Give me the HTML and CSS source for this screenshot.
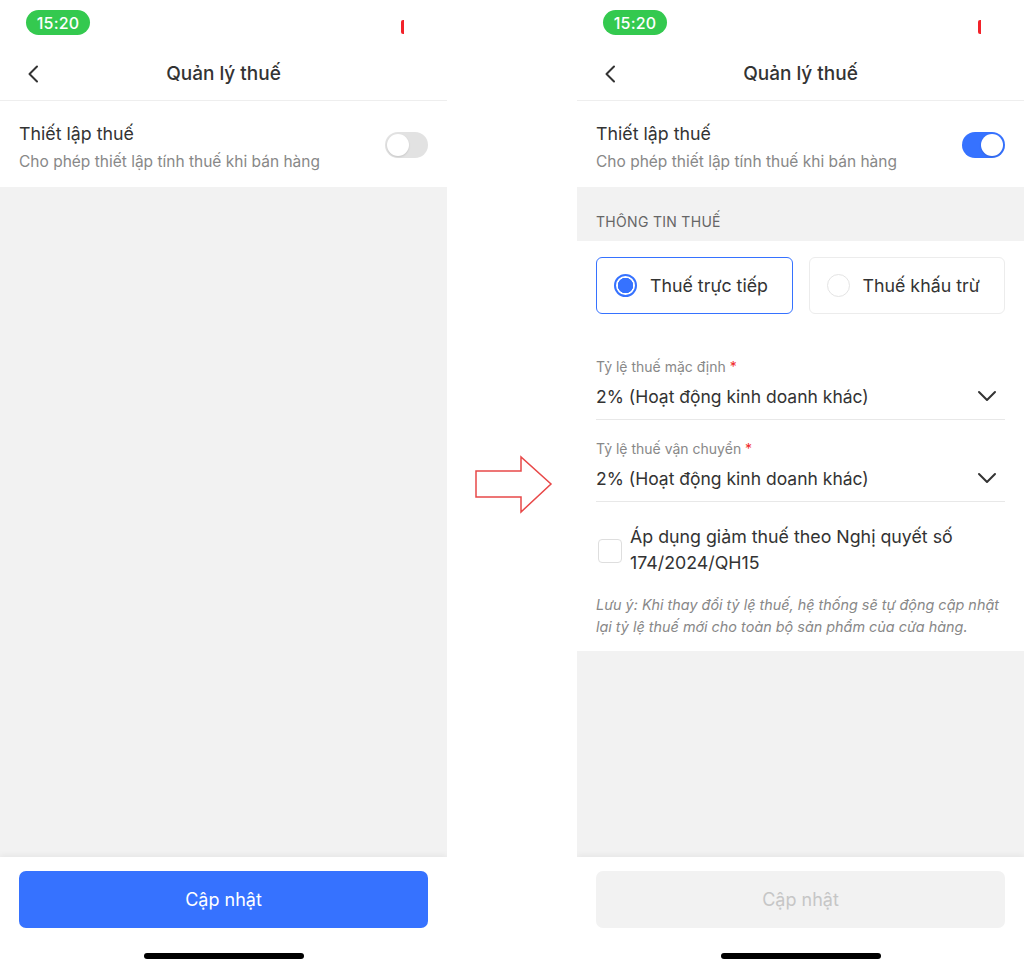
FILE: index.html
```html
<!DOCTYPE html>
<html lang="vi">
<head>
<meta charset="utf-8">
<title>Quản lý thuế</title>
<link rel="stylesheet" href="styles.css">
</head>
<body>
<div class="page">
  <section class="phone">
    <div class="status">
      <span class="time">15:20</span>
      <span class="rec"></span>
    </div>
    <header class="nav">
      <svg class="back" width="12" height="18" viewBox="0 0 12 18"><path d="M10 1.5 L2.5 9 L10 16.5" fill="none" stroke="#333" stroke-width="2" stroke-linecap="round" stroke-linejoin="round"/></svg>
      <h1 class="title">Quản lý thuế</h1>
      <span></span>
    </header>
    <div class="setting">
      <div class="setting-text">
        <div class="setting-title">Thiết lập thuế</div>
        <div class="setting-sub">Cho phép thiết lập tính thuế khi bán hàng</div>
      </div>
      <span class="toggle"><span class="knob"></span></span>
    </div>
    <div class="fill"></div>
    <footer class="bottom">
      <button class="btn btn-primary">Cập nhật</button>
      <span class="home"></span>
    </footer>
  </section>

  <div class="middle">
    <svg class="arrow" width="78" height="60" viewBox="0 0 78 60"><path d="M1 16 H46 V2 L76 29 L46 57 V42 H1 Z" fill="#fff" stroke="#e84848" stroke-width="1.5" stroke-linejoin="miter"/></svg>
  </div>

  <section class="phone">
    <div class="status">
      <span class="time">15:20</span>
      <span class="rec"></span>
    </div>
    <header class="nav">
      <svg class="back" width="12" height="18" viewBox="0 0 12 18"><path d="M10 1.5 L2.5 9 L10 16.5" fill="none" stroke="#333" stroke-width="2" stroke-linecap="round" stroke-linejoin="round"/></svg>
      <h1 class="title">Quản lý thuế</h1>
      <span></span>
    </header>
    <div class="setting">
      <div class="setting-text">
        <div class="setting-title">Thiết lập thuế</div>
        <div class="setting-sub">Cho phép thiết lập tính thuế khi bán hàng</div>
      </div>
      <span class="toggle on"><span class="knob"></span></span>
    </div>
    <div class="section-head">THÔNG TIN THUẾ</div>
    <div class="form">
      <div class="radios">
        <label class="radio-card active"><span class="radio"></span>Thuế trực tiếp</label>
        <label class="radio-card"><span class="radio"></span>Thuế khấu trừ</label>
      </div>
      <div class="field">
        <div class="field-label">Tỷ lệ thuế mặc định <span class="req">*</span></div>
        <div class="field-value">
          <span>2% (Hoạt động kinh doanh khác)</span>
          <svg width="20" height="12" viewBox="0 0 20 12"><path d="M2 2 L10 10 L18 2" fill="none" stroke="#333" stroke-width="2" stroke-linecap="round" stroke-linejoin="round"/></svg>
        </div>
      </div>
      <div class="field">
        <div class="field-label">Tỷ lệ thuế vận chuyển <span class="req">*</span></div>
        <div class="field-value">
          <span>2% (Hoạt động kinh doanh khác)</span>
          <svg width="20" height="12" viewBox="0 0 20 12"><path d="M2 2 L10 10 L18 2" fill="none" stroke="#333" stroke-width="2" stroke-linecap="round" stroke-linejoin="round"/></svg>
        </div>
      </div>
      <div class="check-row">
        <span class="checkbox"></span>
        <span class="check-text">Áp dụng giảm thuế theo Nghị quyết số 174/2024/QH15</span>
      </div>
      <p class="note">Lưu ý: Khi thay đổi tỷ lệ thuế, hệ thống sẽ tự động cập nhật lại tỷ lệ thuế mới cho toàn bộ sản phẩm của cửa hàng.</p>
    </div>
    <div class="fill"></div>
    <footer class="bottom">
      <button class="btn btn-disabled">Cập nhật</button>
      <span class="home"></span>
    </footer>
  </section>
</div>
</body>
</html>
```

FILE: styles.css
```css
* { box-sizing: border-box; }
html, body { margin: 0; padding: 0; background: #fff; }
body { font-family: "Inter", "Roboto", "Noto Sans", sans-serif; color: #333; }

.page { display: flex; width: 1024px; height: 969px; }

.phone {
  width: 447px;
  height: 969px;
  display: flex;
  flex-direction: column;
  background: #f2f2f2;
  flex: none;
  overflow: hidden;
}

.middle {
  width: 130px;
  flex: none;
  display: flex;
  align-items: center;
  justify-content: flex-start;
  padding-left: 28px;
  background: #fff;
}
.arrow { display: block; margin-top: 1px; }

.status {
  height: 50px;
  background: #fff;
  display: flex;
  justify-content: space-between;
  padding: 10px 43px 0 26px;
}
.time {
  width: 64px;
  height: 25px;
  border-radius: 13px;
  background: #34c94f;
  color: #fff;
  font-size: 16px;
  font-weight: 500;
  display: flex;
  align-items: center;
  justify-content: center;
  letter-spacing: 0.2px;
}
.rec {
  width: 3px;
  height: 14px;
  margin-top: 10px;
  background: #f2222a;
  border-radius: 2px 0 0 2px;
}

.nav {
  height: 51px;
  background: #fff;
  border-bottom: 1px solid #eeeeee;
  display: grid;
  grid-template-columns: 60px 1fr 60px;
  align-items: center;
  padding-bottom: 3px;
}
.back { margin-left: 27px; }
.title {
  margin: 0;
  text-align: center;
  font-size: 19px;
  font-weight: 500;
  color: #333;
}

.setting {
  height: 86px;
  background: #fff;
  display: flex;
  align-items: center;
  justify-content: space-between;
  padding: 6px 19px 0;
}
.setting-title { font-size: 17.8px; color: #333; line-height: 22px; }
.setting-sub { font-size: 15.5px; color: #888; line-height: 20px; margin-top: 7px; }

.toggle {
  width: 43px;
  height: 26px;
  border-radius: 13px;
  background: #e2e2e2;
  position: relative;
  margin-top: -4px;
}
.knob {
  position: absolute;
  top: 2px;
  left: 2px;
  width: 22px;
  height: 22px;
  border-radius: 50%;
  background: #fff;
  box-shadow: 0 1px 2px rgba(0,0,0,0.12);
}
.toggle.on { background: #3672ff; }
.toggle.on .knob { left: 19px; }

.section-head {
  height: 54px;
  padding: 26px 19px 0;
  font-size: 14px;
  color: #666;
  letter-spacing: 0.3px;
  line-height: 18px;
}

.form { background: #fff; padding: 16px 19px 13px; }

.radios { display: flex; gap: 16px; }
.radio-card {
  flex: 1;
  height: 57px;
  border: 1px solid #ececec;
  border-radius: 6px;
  display: flex;
  align-items: center;
  padding-left: 17px;
  font-size: 17.8px;
  color: #333;
}
.radio-card.active { border-color: #3672ff; }
.radio {
  width: 23px;
  height: 23px;
  border-radius: 50%;
  border: 1.5px solid #e4e4e4;
  margin-right: 13px;
  flex: none;
}
.radio-card.active .radio {
  border: 2px solid #3672ff;
  background: radial-gradient(circle, #3672ff 0 7.5px, #fff 8px);
}

.field { border-bottom: 1px solid #e8e8e8; padding-top: 19px; }
.radios + .field { padding-top: 43px; }
.field-label { font-size: 14px; color: #888; line-height: 20px; }
.req { color: #f02b2b; }
.field-value {
  display: flex;
  align-items: center;
  justify-content: space-between;
  height: 42px;
  padding-bottom: 4px;
  font-size: 17.5px;
  color: #333;
}
.field-value svg { margin-right: 8px; }

.check-row { display: flex; align-items: center; padding-top: 22px; }
.checkbox {
  width: 24px;
  height: 24px;
  border: 1.5px solid #dedede;
  border-radius: 4px;
  flex: none;
  margin: 2px 8px 0 2px;
}
.check-text { font-size: 17.8px; line-height: 26px; color: #333; }

.note {
  margin: 18px 0 0;
  font-size: 14.4px;
  line-height: 22px;
  font-style: italic;
  color: #888;
}

.fill { flex: 1; }

.bottom {
  height: 112px;
  background: #fff;
  box-shadow: 0 -2px 6px rgba(0,0,0,0.05);
  display: flex;
  flex-direction: column;
  align-items: center;
  padding: 14px 19px 0;
}
.btn {
  width: 100%;
  height: 57px;
  border: none;
  border-radius: 7px;
  font-family: inherit;
  font-size: 18px;
}
.btn-primary { background: #3672ff; color: #fff; }
.btn-disabled { background: #f2f2f2; color: #c6c6c6; }
.home {
  width: 160px;
  height: 6px;
  border-radius: 3px;
  background: #000;
  margin-top: 25px;
}
```
